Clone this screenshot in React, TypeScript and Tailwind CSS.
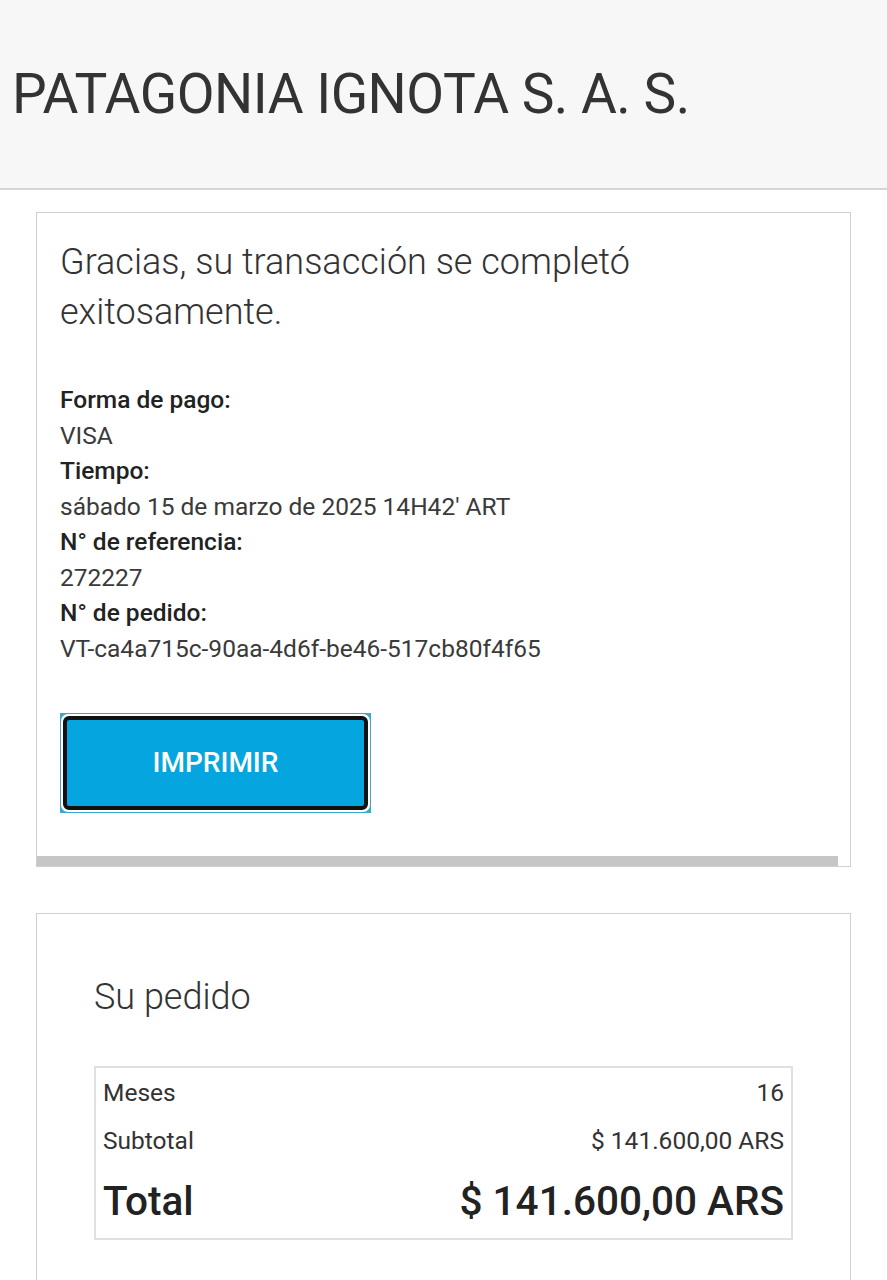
import React from "react";

const Label = ({ children }: { children: React.ReactNode }) => (
  <div className="font-medium text-[#222]">{children}</div>
);
const Value = ({ children }: { children: React.ReactNode }) => (
  <div className="font-normal text-[#3a3a3a]">{children}</div>
);

export default function App() {
  return (
    <div className="min-h-[1280px] bg-white font-['Roboto',sans-serif] text-[#333]">
      <header className="h-[190px] bg-[#f7f7f7] border-b-2 border-[#d6d6d6] flex items-center pl-[12px]">
        <h1 className="text-[55px] font-normal leading-none text-[#333] tracking-[-0.5px]">
          PATAGONIA IGNOTA S. A. S.
        </h1>
      </header>

      <main className="px-[36px] pt-[22px] flex flex-col gap-[46px]">
        <section className="border border-[#cfcfcf] flex flex-col">
          <div className="pl-[23px] pr-[24px] pt-[24px] pb-[43px]">
            <h2 className="text-[36px] font-light leading-[50px] text-[#333] w-[640px]">
              Gracias, su transacción se completó exitosamente.
            </h2>
            <div className="mt-[45px] text-[24.5px] leading-[35.5px]">
              <Label>Forma de pago:</Label>
              <Value>VISA</Value>
              <Label>Tiempo:</Label>
              <Value>sábado 15 de marzo de 2025 14H42' ART</Value>
              <Label>N° de referencia:</Label>
              <Value>272227</Value>
              <Label>N° de pedido:</Label>
              <Value>VT-ca4a715c-90aa-4d6f-be46-517cb80f4f65</Value>
            </div>
            <div className="mt-[47px] w-[311px] h-[100px] bg-[#3aa9cc] p-[1px]">
              <div className="w-full h-full bg-white rounded-[7px] p-[2px]">
                <button className="w-full h-full rounded-[6px] border-[4px] border-[#111] bg-[#05a5df] text-white text-[28px] font-medium">
                  IMPRIMIR
                </button>
              </div>
            </div>
          </div>
          <div className="h-[10px] bg-[#c6c6c6] mr-[12px]" />
        </section>

        <section className="border border-[#cfcfcf] border-b-0 pl-[57px] pr-[57px] pt-[58px] pb-[60px]">
          <h2 className="text-[36px] font-light leading-[50px] text-[#333]">Su pedido</h2>
          <div className="mt-[44px] border-2 border-[#e0e0e0] pl-[7px] pr-[7px] pt-[7px] pb-[9px]">
            <div className="flex justify-between text-[24.5px] leading-[36px] text-[#333]">
              <span>Meses</span>
              <span>16</span>
            </div>
            <div className="mt-[12px] flex justify-between text-[24.5px] leading-[36px] text-[#333]">
              <span>Subtotal</span>
              <span>$ 141.600,00 ARS</span>
            </div>
            <div className="mt-[14px] flex justify-between text-[40.5px] leading-[56px] font-medium text-[#222]">
              <span>Total</span>
              <span>$ 141.600,00 ARS</span>
            </div>
          </div>
        </section>
      </main>
    </div>
  );
}
